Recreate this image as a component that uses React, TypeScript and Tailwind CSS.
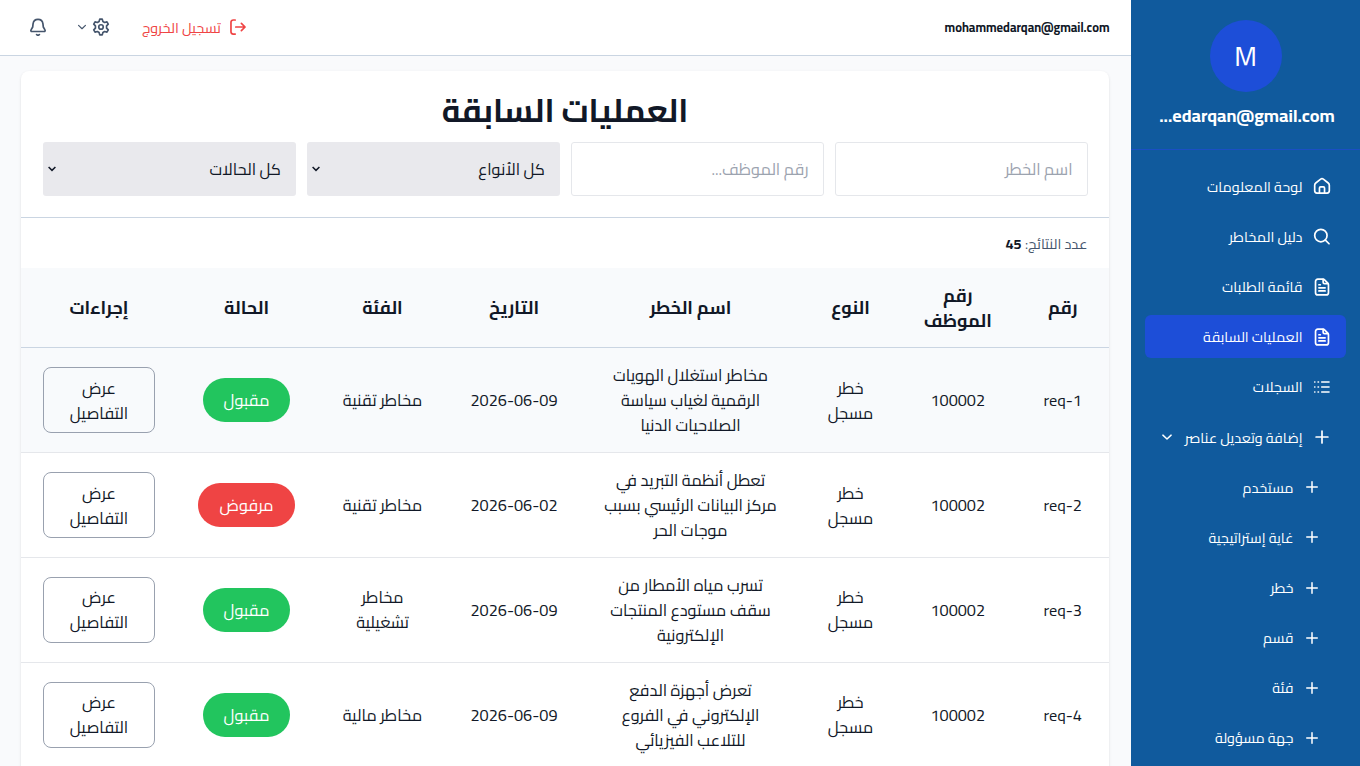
import type { ReactNode } from "react";

type IconName =
  | "home"
  | "search"
  | "file"
  | "list"
  | "plus"
  | "chevron"
  | "bell"
  | "gear"
  | "logout";

const iconPaths: Record<IconName, ReactNode> = {
  home: (
    <>
      <path d="M1.5 7.3a2.5 2.5 0 0 1 .97-1.98L6.8 1.9a2 2 0 0 1 2.4 0l4.33 3.42a2.5 2.5 0 0 1 .97 1.98v4.95a2 2 0 0 1-2 2h-9a2 2 0 0 1-2-2z" />
      <path d="M5.75 14V9.75a1 1 0 0 1 1-1h2.5a1 1 0 0 1 1 1V14" />
    </>
  ),
  search: (
    <>
      <circle cx="7" cy="6.75" r="5.5" />
      <path d="m11 10.75 3.25 3.25" />
    </>
  ),
  file: (
    <>
      <path d="M2.25 3a2 2 0 0 1 2-2h4.6a2 2 0 0 1 1.4.6l2.9 2.9a2 2 0 0 1 .6 1.4V13a2 2 0 0 1-2 2h-7.5a2 2 0 0 1-2-2z" />
      <path d="M9 1.25v2.5a1.25 1.25 0 0 0 1.25 1.25h3M5.25 6h1.25M5.25 8.75h5.5M5.25 11.5h5.5" />
    </>
  ),
  list: (
    <path
      strokeWidth="1.4"
      d="M1.5 3.5h.2M1.5 8h.2M1.5 12.5h.2M4.5 3.5h.4M4.5 8h.4M4.5 12.5h.4M7.75 3.5h6.5M7.75 8h6.5M7.75 12.5h6.5"
    />
  ),
  plus: <path d="M8 2.75v10.5M2.75 8h10.5" />,
  chevron: <path d="m2.5 5.5 5.5 5.25 5.5-5.25" strokeWidth="1.9" />,
  bell: (
    <>
      <path d="M8 1.25c-2.3 0-4.1 1.6-4.4 3.9L3.3 8 1.8 10.6a.9.9 0 0 0 .8 1.4h10.8a.9.9 0 0 0 .8-1.4L12.7 8l-.3-2.85C12.1 2.85 10.3 1.25 8 1.25z" />
      <path d="M6.75 14.75a1.6 1.6 0 0 0 2.5 0" />
    </>
  ),
  gear: (
    <>
      <circle cx="8" cy="8" r="2" />
      <path d="M6.9 1h2.2l.6 2.1 1.5.85 2.1-.55 1.15 2L12.95 7v2l1.5 1.6-1.15 2-2.1-.55-1.5.85L9.1 15H6.9l-.6-2.1-1.5-.85-2.1.55-1.15-2L3.05 9V7L1.55 5.4l1.15-2 2.1.55 1.5-.85z" />
    </>
  ),
  logout: (
    <>
      <path d="M5.5 1.75H3.75a2 2 0 0 0-2 2v8.5a2 2 0 0 0 2 2H5.5" />
      <path d="M6 8h8.25M11 4.75 14.25 8 11 11.25" />
    </>
  ),
};

function Icon({ name, className }: { name: IconName; className: string }) {
  return (
    <svg
      viewBox="0 0 16 16"
      fill="none"
      stroke="currentColor"
      strokeWidth="1.5"
      strokeLinecap="round"
      strokeLinejoin="round"
      className={`shrink-0 ${className}`}
    >
      {iconPaths[name]}
    </svg>
  );
}

type MenuItem = { label: string; icon: IconName; active?: boolean; expandable?: boolean };

const menu: MenuItem[] = [
  { label: "لوحة المعلومات", icon: "home" },
  { label: "دليل المخاطر", icon: "search" },
  { label: "قائمة الطلبات", icon: "file" },
  { label: "العمليات السابقة", icon: "file", active: true },
  { label: "السجلات", icon: "list" },
  { label: "إضافة وتعديل عناصر", icon: "plus", expandable: true },
];

const subMenu = ["مستخدم", "غاية إستراتيجية", "خطر", "قسم", "فئة", "جهة مسؤولة"];

type Request = {
  id: string;
  employee: string;
  type: string;
  name: string;
  date: string;
  category: string;
  accepted: boolean;
};

const requests: Request[] = [
  {
    id: "req-1",
    employee: "100002",
    type: "خطر مسجل",
    name: "مخاطر استغلال الهويات الرقمية لغياب سياسة الصلاحيات الدنيا",
    date: "2026-06-09",
    category: "مخاطر تقنية",
    accepted: true,
  },
  {
    id: "req-2",
    employee: "100002",
    type: "خطر مسجل",
    name: "تعطل أنظمة التبريد في مركز البيانات الرئيسي بسبب موجات الحر",
    date: "2026-06-02",
    category: "مخاطر تقنية",
    accepted: false,
  },
  {
    id: "req-3",
    employee: "100002",
    type: "خطر مسجل",
    name: "تسرب مياه الأمطار من سقف مستودع المنتجات الإلكترونية",
    date: "2026-06-09",
    category: "مخاطر تشغيلية",
    accepted: true,
  },
  {
    id: "req-4",
    employee: "100002",
    type: "خطر مسجل",
    name: "تعرض أجهزة الدفع الإلكتروني في الفروع للتلاعب الفيزيائي",
    date: "2026-06-09",
    category: "مخاطر مالية",
    accepted: true,
  },
];

const rowGrid =
  "grid grid-cols-[92.5px_117.5px_97px_223px_130px_133px_139px_156px] items-center text-center";

function Sidebar() {
  return (
    <aside className="flex w-[229px] shrink-0 flex-col bg-[#105a9d] text-white">
      <div className="flex h-[150px] shrink-0 flex-col items-center border-b border-[#1a4fc4] pt-5">
        <div className="flex size-[72px] items-center justify-center rounded-full bg-[#1d4ed8] text-[27px] leading-none">
          M
        </div>
        <div dir="ltr" className="mt-[11px] mr-[-3px] text-[18px] leading-[25px] font-bold">
          ...edarqan@gmail.com
        </div>
      </div>
      <nav className="flex flex-col gap-[7.2px] px-[14px] pt-[15px] text-[14.32px]">
        {menu.map((item) => (
          <a
            key={item.label}
            className={`flex h-[42.96px] shrink-0 items-center rounded-md px-[15px] ${
              item.active ? "bg-[#1d4ed8]" : ""
            }`}
          >
            <Icon name={item.icon} className="size-[18px]" />
            <span className={`mr-[10.5px] ${item.expandable ? "pt-px" : ""}`}>{item.label}</span>
            {item.expandable && <Icon name="chevron" className="mr-3 size-3" />}
          </a>
        ))}
        {subMenu.map((label) => (
          <a key={label} className="flex h-[42.96px] shrink-0 items-center px-[26px]">
            <Icon name="plus" className="size-4" />
            <span className="mr-[10.5px]">{label}</span>
          </a>
        ))}
      </nav>
    </aside>
  );
}

function TopBar() {
  return (
    <header className="flex h-14 shrink-0 items-center justify-between border-b border-slate-300 bg-white pr-[21.5px] pl-[29px]">
      <span dir="ltr" className="pt-px text-[12.53px] font-bold">
        mohammedarqan@gmail.com
      </span>
      <div className="flex items-center pb-px text-slate-600">
        <button className="flex items-center gap-[8px] text-[14.32px] text-[#ef4444]">
          <Icon name="logout" className="size-[18px]" />
          <span className="pt-0.5">تسجيل الخروج</span>
        </button>
        <button className="mr-8 flex items-center gap-[5px]">
          <Icon name="gear" className="size-[18px]" />
          <Icon name="chevron" className="size-[10px]" />
        </button>
        <button className="mr-[30px]">
          <Icon name="bell" className="size-[18px]" />
        </button>
      </div>
    </header>
  );
}

function FilterSelect({ value }: { value: string }) {
  return (
    <button className="flex h-[54px] items-center justify-between rounded-[3px] bg-[#e9e9ed] pr-[15px] pl-[5px]">
      {value}
      <svg viewBox="0 0 8 6" fill="none" stroke="currentColor" strokeWidth="1.5" className="h-1.5 w-2">
        <path d="m.6 1 3.4 3.4L7.4 1" />
      </svg>
    </button>
  );
}

function Filters() {
  const inputClass =
    "h-[54px] w-full min-w-0 rounded-[3px] border border-gray-200 bg-white px-[14.5px] placeholder:text-[#9ca3af]";
  return (
    <div className="grid grid-cols-4 gap-[11px] pr-[21px] pl-[22px] text-[16.2px]">
      <input className={inputClass} placeholder="اسم الخطر" />
      <input className={inputClass} placeholder="رقم الموظف..." />
      <FilterSelect value="كل الأنواع" />
      <FilterSelect value="كل الحالات" />
    </div>
  );
}

export default function App() {
  return (
    <div
      dir="rtl"
      className="flex h-screen overflow-hidden bg-[#f9fafc] font-[Cairo,'Noto_Sans_Arabic','Open_Sans',sans-serif] text-[#111827]"
    >
      <Sidebar />
      <div className="flex min-w-0 flex-1 flex-col">
        <TopBar />
        <main className="pt-[15px] pr-[22px] pl-[21px]">
          <section className="h-[760px] overflow-hidden rounded-lg bg-white shadow-sm">
            <h1 className="pt-[19px] pb-[12px] text-center text-[32.2px] leading-[40px] font-bold">
              العمليات السابقة
            </h1>
            <Filters />
            <div className="mt-[21px] flex h-[51px] items-center gap-[3.5px] border-t border-slate-300 px-[21.5px] pt-0.5 text-[14.32px]">
              <span className="text-slate-600">عدد النتائج:</span>
              <b>45</b>
            </div>
            <div
              className={`${rowGrid} h-[80px] border-b border-slate-300 bg-slate-50 text-[17.9px] leading-[25px] font-bold`}
            >
              <div>رقم</div>
              <div className="px-5">رقم الموظف</div>
              <div>النوع</div>
              <div>اسم الخطر</div>
              <div>التاريخ</div>
              <div>الفئة</div>
              <div>الحالة</div>
              <div>إجراءات</div>
            </div>
            {requests.map((r, i) => (
              <div
                key={r.id}
                className={`${rowGrid} h-[105px] border-b border-gray-200 text-[16.3px] leading-[25px] ${
                  i === 0 ? "bg-slate-50" : ""
                }`}
              >
                <div dir="ltr">{r.id}</div>
                <div>{r.employee}</div>
                <div className={`px-[21px] ${i < 2 ? "pt-px" : ""}`}>{r.type}</div>
                <div className="px-[21px]">{r.name}</div>
                <div dir="ltr">{r.date}</div>
                <div className="px-[21.5px]">{r.category}</div>
                <div className="flex justify-center">
                  <span
                    className={`flex h-11 items-center rounded-full px-[21px] text-white ${
                      r.accepted ? "bg-[#22c55e]" : "bg-[#ef4444]"
                    }`}
                  >
                    {r.accepted ? "مقبول" : "مرفوض"}
                  </span>
                </div>
                <div className="px-[22px]">
                  <button
                    className={`h-[66px] w-full rounded-lg border border-gray-400 px-5 ${
                      i < 2 ? "pt-px" : ""
                    }`}
                  >
                    عرض التفاصيل
                  </button>
                </div>
              </div>
            ))}
          </section>
        </main>
      </div>
    </div>
  );
}
